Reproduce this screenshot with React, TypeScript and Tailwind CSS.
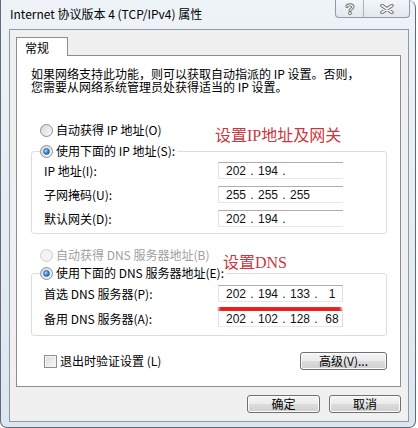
import React from "react";

const cjk = { fontFamily: '"Noto Sans CJK SC", "Noto Sans", sans-serif' };
const num = { fontFamily: '"Liberation Sans", Arial, sans-serif' };

function Radio({ checked, disabled }: { checked?: boolean; disabled?: boolean }) {
  return (
    <span
      className={
        disabled
          ? "relative inline-block w-[13px] h-[13px] shrink-0 rounded-full border border-[#cdcdcd] bg-[#f3f3f3]"
          : "relative inline-block w-[13px] h-[13px] shrink-0 rounded-full border border-[#8a8f96] bg-[linear-gradient(135deg,#d6d9dd,#f7f8f9)]"
      }
    >
      {checked && (
        <span className="absolute left-[2px] top-[2px] w-[7px] h-[7px] rounded-full border border-[#3f6fa8] bg-[radial-gradient(circle_at_35%_35%,#a9dcff,#2f7fd0_55%,#134a8c)]" />
      )}
    </span>
  );
}

function IpBox({ parts, cut }: { parts: string[]; cut?: boolean }) {
  return (
    <div
      className={
        cut
          ? "w-[125px] h-[17px] flex items-center pl-[7px] bg-white border border-r-0 border-t-[#abadb3] border-l-[#e2e3ea] border-b-[#e3e9ef] text-[12px] text-[#111]"
          : "w-[125px] h-[17px] flex items-center pl-[7px] bg-white border border-t-[#abadb3] border-l-[#e2e3ea] border-r-[#dbdfe6] border-b-[#e3e9ef] text-[12px] text-[#111]"
      }
      style={num}
    >
      {parts.map((p, i) => (
        <React.Fragment key={i}>
          {i > 0 && <span className="w-[12px] text-center">{p === "" && i > 2 ? "" : "."}</span>}
          <span className="w-[20px] text-center">{p}</span>
        </React.Fragment>
      ))}
    </div>
  );
}

function Row({ label, parts, cut }: { label: string; parts: string[]; cut?: boolean }) {
  return (
    <div className="flex items-center h-[17px]">
      <span className="w-[174px] text-[12px] leading-[12px]">{label}</span>
      <IpBox parts={parts} cut={cut} />
    </div>
  );
}

function Btn({ children, w }: { children: React.ReactNode; w: string }) {
  return (
    <div
      className={
        w +
        " h-[18px] rounded-[3px] border border-[#707070] bg-[linear-gradient(180deg,#f4f4f4_0%,#ececec_48%,#dcdcdc_52%,#cfcfcf_100%)] flex items-center justify-center text-[12px] text-black shadow-[inset_0_0_0_1px_#fcfcfc]"
      }
    >
      {children}
    </div>
  );
}

export default function App() {
  return (
    <div className="relative w-[418px] h-[428px] overflow-hidden bg-white" style={cjk}>
      <div className="w-[416px] h-[428px] rounded-tr-[8px] rounded-b-[7px] border border-t-0 border-[#5f6b78] bg-[linear-gradient(180deg,#eef3f8,#dde6ef)] flex flex-col">
        {/* title bar */}
        <div className="h-[29px] flex justify-between items-start">
          <div className="pl-[9px] pt-[5px] text-[12px] leading-[17px] text-black">
            Internet 协议版本 4 (TCP/IPv4) 属性
          </div>
          <div className="flex mr-[5px] h-[18px] rounded-b-[4px] border border-t-0 border-[#8e9bab] bg-[linear-gradient(180deg,#f3f6f9,#e2e8ee)]">
            <div className="w-[28px] h-full flex items-center justify-center border-r border-[#a9b4c1]">
              <svg width="10" height="12" viewBox="0 0 10 12">
                <path d="M2 3.5 C2 1.2 8 1.2 8 3.8 C8 5.6 5 5.8 5 7.6" fill="none" stroke="#6c6c6c" strokeWidth="3" strokeLinecap="round" />
                <path d="M2 3.5 C2 1.2 8 1.2 8 3.8 C8 5.6 5 5.8 5 7.6" fill="none" stroke="#f6f6f6" strokeWidth="1.2" strokeLinecap="round" />
                <circle cx="5" cy="10.2" r="1.5" fill="#f6f6f6" stroke="#6c6c6c" strokeWidth="0.9" />
              </svg>
            </div>
            <div className="w-[45px] h-full flex items-center justify-center">
              <svg width="14" height="10" viewBox="0 0 14 10">
                <path d="M2 1.5 L12 8.5 M12 1.5 L2 8.5" stroke="#6c6c6c" strokeWidth="3.4" strokeLinecap="round" />
                <path d="M2 1.5 L12 8.5 M12 1.5 L2 8.5" stroke="#f6f6f6" strokeWidth="1.6" strokeLinecap="round" />
              </svg>
            </div>
          </div>
        </div>

        {/* client */}
        <div className="ml-[8px] w-[400px] h-[393px] border border-[#8d9aa8] bg-[#f0f0f0] pl-[6px] pr-[7px] pt-[7px] flex flex-col">
          <div className="relative z-10 -mb-[1px] w-[52px] h-[19px] bg-white border border-b-0 border-[#898c95] text-[12px] leading-[12px] pl-[8px] pt-[4px] text-black">
            常规
          </div>
          <div className="w-[385px] h-[332px] bg-white border border-[#898c95] pl-[14px] pr-[12px] pt-[11px] flex flex-col text-black">
            <p className="text-[12px] leading-[13px]">
              如果网络支持此功能，则可以获取自动指派的 IP 设置。否则，
              <br />
              您需要从网络系统管理员处获得适当的 IP 设置。
            </p>

            <div className="mt-[31px] ml-[9px] flex items-center gap-[3px] h-[12px] text-[12px]">
              <Radio />
              <span>自动获得 IP 地址(O)</span>
            </div>

            <fieldset className="mt-[9px] w-[356px] border border-[#d5dfe5] rounded-[3px] p-0 pb-[6px]">
              <legend className="ml-[8px] px-0 pr-[2px] bg-white h-[12px] flex items-center gap-[3px] text-[12px] leading-[12px]">
                <Radio checked />
                <span>使用下面的 IP 地址(S):</span>
              </legend>
              <div className="pl-[12px] pt-[5px] flex flex-col gap-[7px]">
                <Row label="IP 地址(I):" parts={["202", "194", "", ""]} cut />
                <Row label="子网掩码(U):" parts={["255", "255", "255", ""]} cut />
                <Row label="默认网关(D):" parts={["202", "194", "", ""]} cut />
              </div>
            </fieldset>

            <div className="mt-[15px] ml-[9px] flex items-center gap-[3px] h-[12px] text-[12px] text-[#a0a0a0]">
              <Radio disabled />
              <span>自动获得 DNS 服务器地址(B)</span>
            </div>

            <fieldset className="mt-[6px] w-[356px] border border-[#d5dfe5] rounded-[3px] p-0 pb-[8px]">
              <legend className="ml-[8px] px-0 pr-[2px] bg-white h-[12px] flex items-center gap-[3px] text-[12px] leading-[12px]">
                <Radio checked />
                <span>使用下面的 DNS 服务器地址(E):</span>
              </legend>
              <div className="pl-[12px] pt-[6px] flex flex-col gap-[8px]">
                <Row label="首选 DNS 服务器(P):" parts={["202", "194", "133", "1"]} />
                <Row label="备用 DNS 服务器(A):" parts={["202", "102", "128", "68"]} />
              </div>
            </fieldset>

            <div className="mt-[16px] h-[18px] flex items-center justify-between w-[356px]">
              <div className="ml-[13px] flex items-center gap-[3px] text-[12px]">
                <span className="w-[13px] h-[13px] border border-[#8e8f8f] bg-[linear-gradient(135deg,#dcdcdc,#f8f8f8)] shadow-[inset_0_0_0_1px_#f4f4f4]" />
                <span>退出时验证设置 (L)</span>
              </div>
              <Btn w="w-[87px]">高级(V)...</Btn>
            </div>
          </div>

          <div className="mt-[8px] flex justify-end gap-[9px]">
            <Btn w="w-[73px]">确定</Btn>
            <Btn w="w-[72px]">取消</Btn>
          </div>
        </div>
      </div>

      {/* annotations */}
      <div
        className="absolute left-[215px] top-[127px] text-[16px] leading-[17px] text-[#c8383f]"
        style={{ fontFamily: '"Liberation Serif", "Noto Sans CJK SC", serif' }}
      >
        设置IP地址及网关
      </div>
      <div
        className="absolute left-[223px] top-[254px] text-[16px] leading-[17px] text-[#c8383f]"
        style={{ fontFamily: '"Liberation Serif", "Noto Sans CJK SC", serif' }}
      >
        设置DNS
      </div>
      <svg className="absolute left-[212px] top-[300px]" width="136" height="20" viewBox="0 0 136 20">
        <defs>
          <filter id="b" x="-10%" y="-100%" width="120%" height="300%">
            <feGaussianBlur stdDeviation="1.2" />
          </filter>
        </defs>
        <path d="M10 8.5 C50 9.5 90 9.5 126 9" stroke="#ee1d1d" strokeWidth="7" strokeLinecap="round" fill="none" filter="url(#b)" />
      </svg>
    </div>
  );
}
